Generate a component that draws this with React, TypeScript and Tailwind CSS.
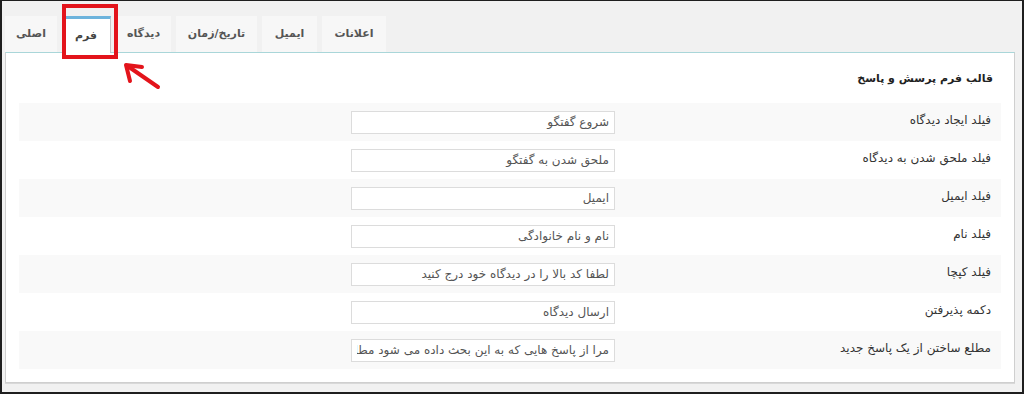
import React from 'react';

const tabs = [
  { label: 'اصلی', w: 'w-[52px]' },
  { label: 'فرم', w: 'w-[49px]', active: true },
  { label: 'دیدگاه', w: 'w-[55px]' },
  { label: 'تاریخ/زمان', w: 'w-[81px]' },
  { label: 'ایمیل', w: 'w-[55px]' },
  { label: 'اعلانات', w: 'w-[64px]' },
];

const rows = [
  { label: 'فیلد ایجاد دیدگاه', value: 'شروع گفتگو' },
  { label: 'فیلد ملحق شدن به دیدگاه', value: 'ملحق شدن به گفتگو' },
  { label: 'فیلد ایمیل', value: 'ایمیل' },
  { label: 'فیلد نام', value: 'نام و نام خانوادگی' },
  { label: 'فیلد کپچا', value: 'لطفا کد بالا را در دیدگاه خود درج کنید' },
  { label: 'دکمه پذیرفتن', value: 'ارسال دیدگاه' },
  { label: 'مطلع ساختن از یک پاسخ جدید', value: 'مرا از پاسخ هایی که به این بحث داده می شود مطلع کن' },
];

const font = { fontFamily: '"DejaVu Sans", "Noto Sans", sans-serif' };

export default function App() {
  return (
    <div
      className="relative w-[1024px] h-[394px] overflow-hidden bg-[#f1f1f1] border-t border-l-2 border-r-2 border-b-2 border-[#1e1e1e]"
      style={font}
    >
      {/* tabs */}
      <div className="flex items-end gap-[5px] pl-[3px] pt-[14px] h-[51px]">
        {tabs.map((t) => (
          <div
            key={t.label}
            dir="rtl"
            className={`${t.w} flex items-center justify-center text-[11px] font-bold ${
              t.active
                ? 'relative z-10 h-[37px] -mb-px bg-white border-t-[3px] border-t-[#6db3dc] border-r border-r-[#c8c8c8] text-[#444]'
                : 'h-[36px] bg-[#f7f7f7] text-[#555]'
            }`}
          >
            {t.label}
          </div>
        ))}
      </div>

      {/* panel */}
      <div className="ml-[3px] w-[1010px] h-[331px] bg-white border border-[#cfcfcf] border-t-[#a9d6d9] shadow-[0_1px_0_#d8d8d8]">
        <div dir="rtl" className="px-[13px]">
          <div className="h-[50px] pt-[18px] pr-[8px] text-[11px] font-bold text-[#222]">قالب فرم پرسش و پاسخ</div>
          <div className="flex flex-col">
            {rows.map((r, i) => (
              <div
                key={r.label}
                className={`flex items-center h-[38px] pr-[10px] ${i % 2 === 0 ? 'bg-[#f9f9f9]' : 'bg-white'}`}
              >
                <div className="w-[376px] self-start pt-[8px] text-[12px] text-[#333] whitespace-nowrap">{r.label}</div>
                <input
                  readOnly
                  value={r.value}
                  className="w-[264px] h-[23px] border border-[#dcdcdc] bg-white px-[5px] text-[12px] text-[#555] outline-none"
                />
              </div>
            ))}
          </div>
        </div>
      </div>

      {/* annotation: red highlight box and arrow */}
      <div className="absolute left-[60px] top-[3px] w-[56px] h-[55px] border-4 border-[#e3141b] z-20" />
      <svg className="absolute left-[118px] top-[58px] z-20" width="44" height="34" viewBox="0 0 44 34">
        <line x1="38" y1="28" x2="9" y2="8" stroke="#e3141b" strokeWidth="4" strokeLinecap="round" />
        <polyline points="22,8 6,6 10,22" fill="none" stroke="#e3141b" strokeWidth="4" strokeLinecap="round" strokeLinejoin="round" />
      </svg>
    </div>
  );
}
